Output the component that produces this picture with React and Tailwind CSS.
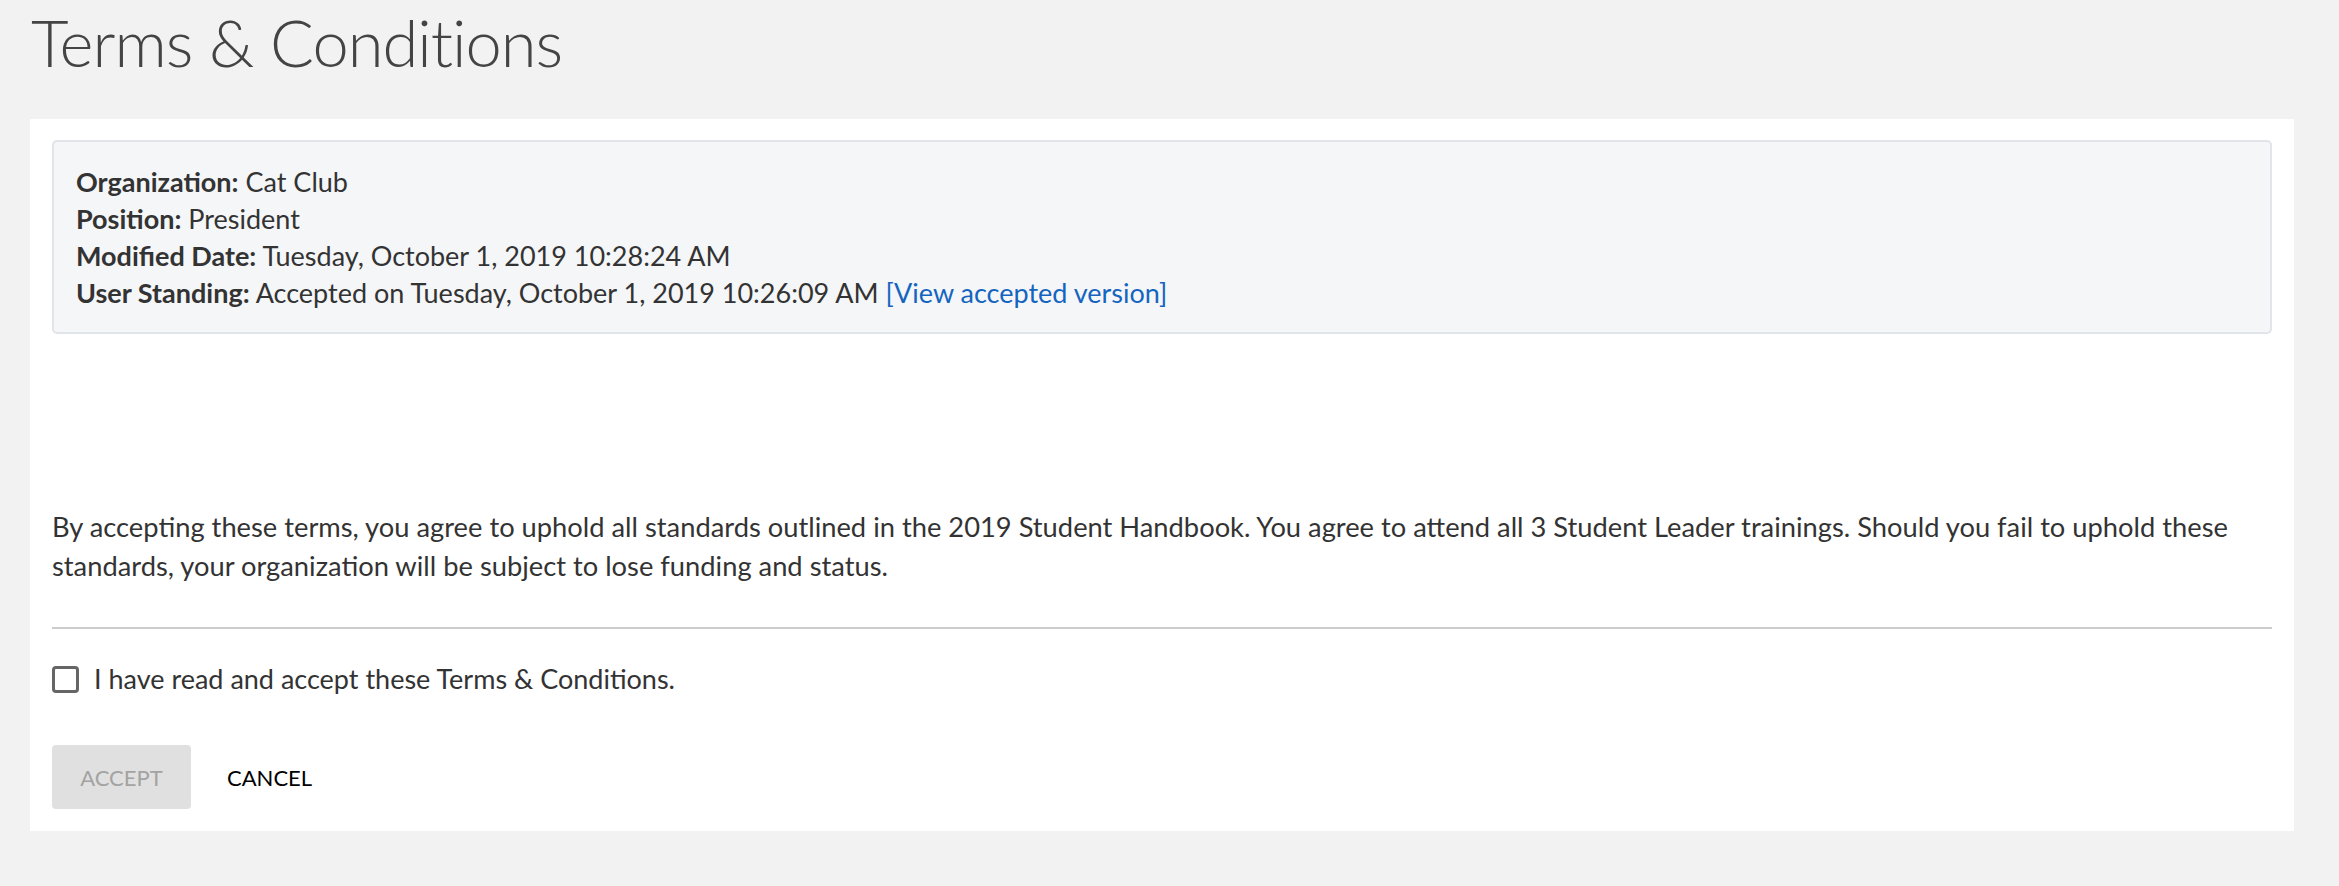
import React from "react";

const InfoRow = ({ label, children }) => (
  <div>
    <span className="font-bold">{label}</span> {children}
  </div>
);

export default function App() {
  return (
    <div
      className="min-h-screen w-full bg-[#f2f2f2] text-[#333333]"
      style={{ fontFamily: "Lato, 'Open Sans', sans-serif" }}
    >
      {/* Page title */}
      <h1 className="pl-[31px] pt-[2px] h-[119px] text-[65px] leading-[80px] tracking-[-1px] font-light text-[#444444]">
        Terms &amp; Conditions
      </h1>

      {/* Card */}
      <div className="ml-[30px] w-[2264px] bg-white px-[22px] pt-[21px] pb-[22px]">
        {/* Summary box */}
        <div className="rounded-[5px] border-2 border-[#e1e4e8] bg-[#f5f6f8] pl-[22px] pt-[21px] pb-[21px] text-[27px] leading-[37px]">
          <InfoRow label="Organization:">Cat Club</InfoRow>
          <InfoRow label="Position:">President</InfoRow>
          <InfoRow label="Modified Date:">Tuesday, October 1, 2019 10:28:24 AM</InfoRow>
          <InfoRow label="User Standing:">
            Accepted on Tuesday, October 1, 2019 10:26:09 AM{" "}
            <a href="#" className="text-[#1565c0]">
              [View accepted version]
            </a>
          </InfoRow>
        </div>

        {/* Terms text */}
        <p className="mt-[173px] text-[27.3px] leading-[39px]">
          By accepting these terms, you agree to uphold all standards outlined in the 2019 Student Handbook. You agree to
          attend all 3 Student Leader trainings. Should you fail to uphold these
          <br />
          standards, your organization will be subject to lose funding and status.
        </p>

        <div className="mt-[42px] h-[2px] bg-[#cccccc]" />

        {/* Checkbox */}
        <label className="mt-[32px] flex items-center gap-[15px] text-[27px] leading-[36px]">
          <span className="block h-[27px] w-[27px] rounded-[4px] border-[3px] border-[#666666] bg-white" />
          <span>I have read and accept these Terms &amp; Conditions.</span>
        </label>

        {/* Actions */}
        <div className="mt-[48px] flex items-center gap-[22px]">
          <button className="h-[64px] w-[139px] rounded-[4px] bg-[#e0e0e0] text-[22px] uppercase text-[#a3a3a3]">
            Accept
          </button>
          <button className="h-[64px] px-[14px] text-[22px] uppercase text-black">Cancel</button>
        </div>
      </div>
    </div>
  );
}
